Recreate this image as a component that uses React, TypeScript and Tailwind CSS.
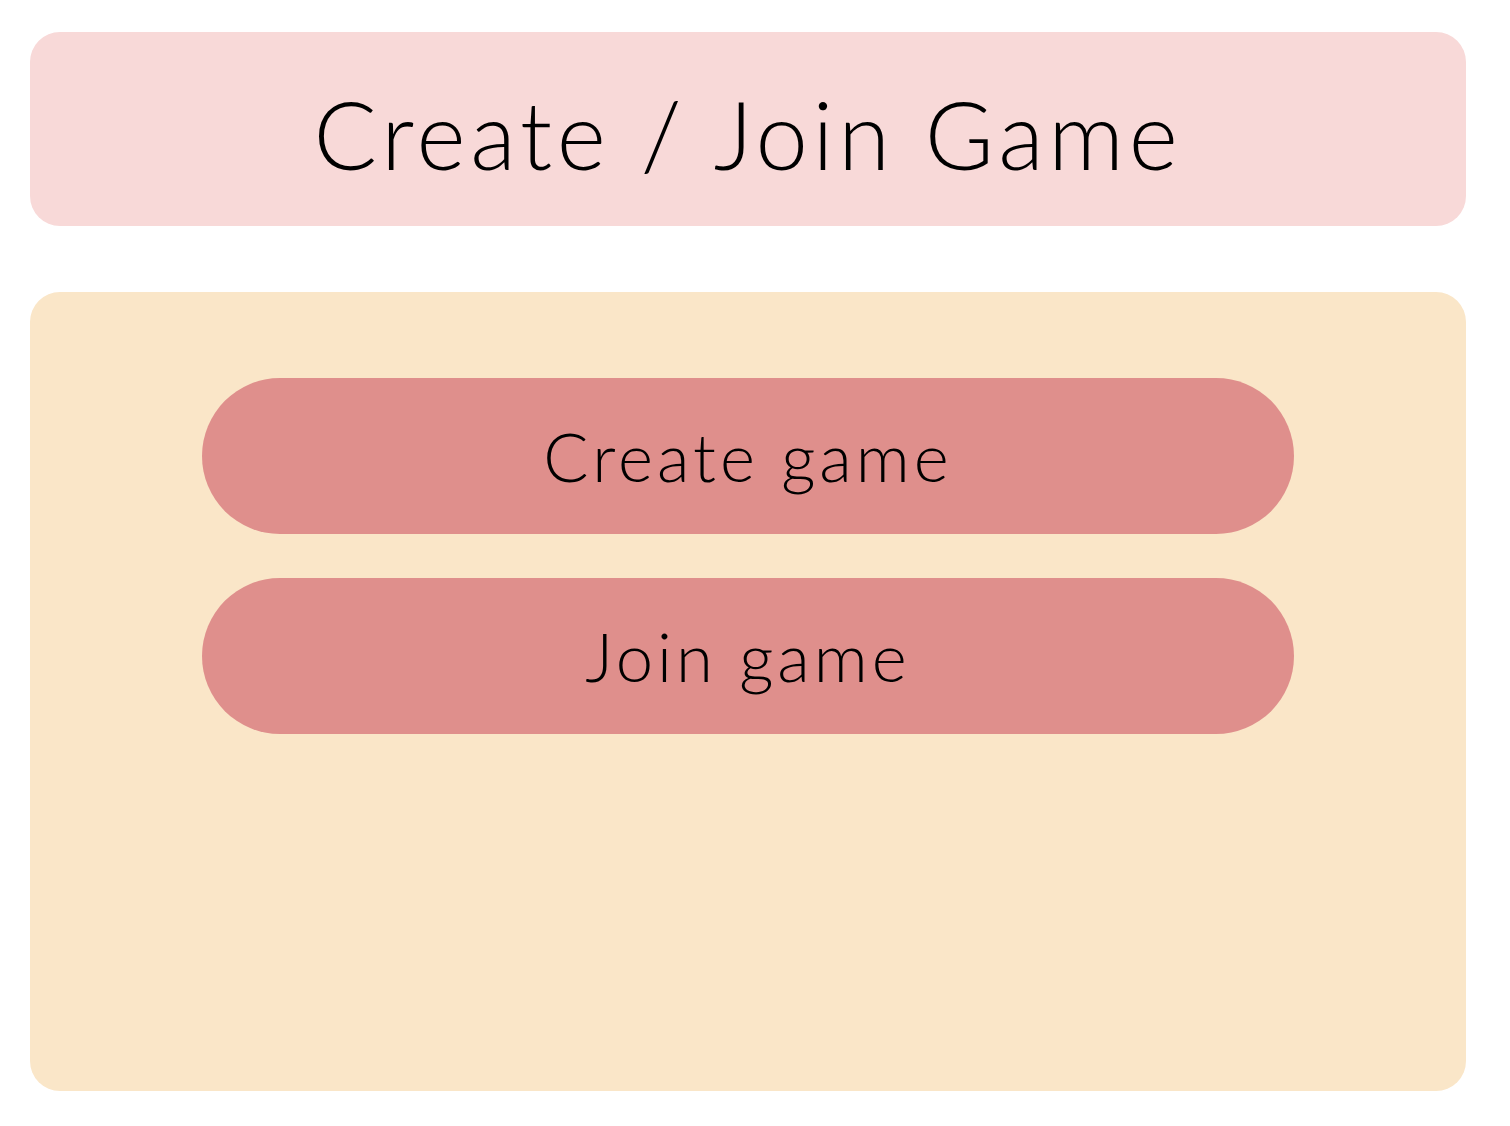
const App = () => {
  return (
    <div className="min-h-screen bg-white pl-[30px] pr-[44px] pt-[32px] pb-[35px] font-['Lato','Noto_Sans',sans-serif] text-black">
      {/* Title */}
      <div className="flex h-[194px] items-center justify-center rounded-[30px] bg-[#f8d9d8] pt-[10px]">
        <h1 className="text-[94px] font-light leading-none tracking-[0.05em]">Create / Join Game</h1>
      </div>

      {/* Menu */}
      <div className="mt-[66px] flex h-[799px] flex-col gap-[44px] rounded-[30px] bg-[#fae6c8] px-[172px] pt-[86px]">
        <button className="flex h-[156px] items-center justify-center rounded-full bg-[#df8f8c] text-[67px] font-light leading-none tracking-[0.06em]">
          Create game
        </button>
        <button className="flex h-[156px] items-center justify-center rounded-full bg-[#df8f8c] text-[67px] font-light leading-none tracking-[0.06em]">
          Join game
        </button>
      </div>
    </div>
  );
};

export default App;
